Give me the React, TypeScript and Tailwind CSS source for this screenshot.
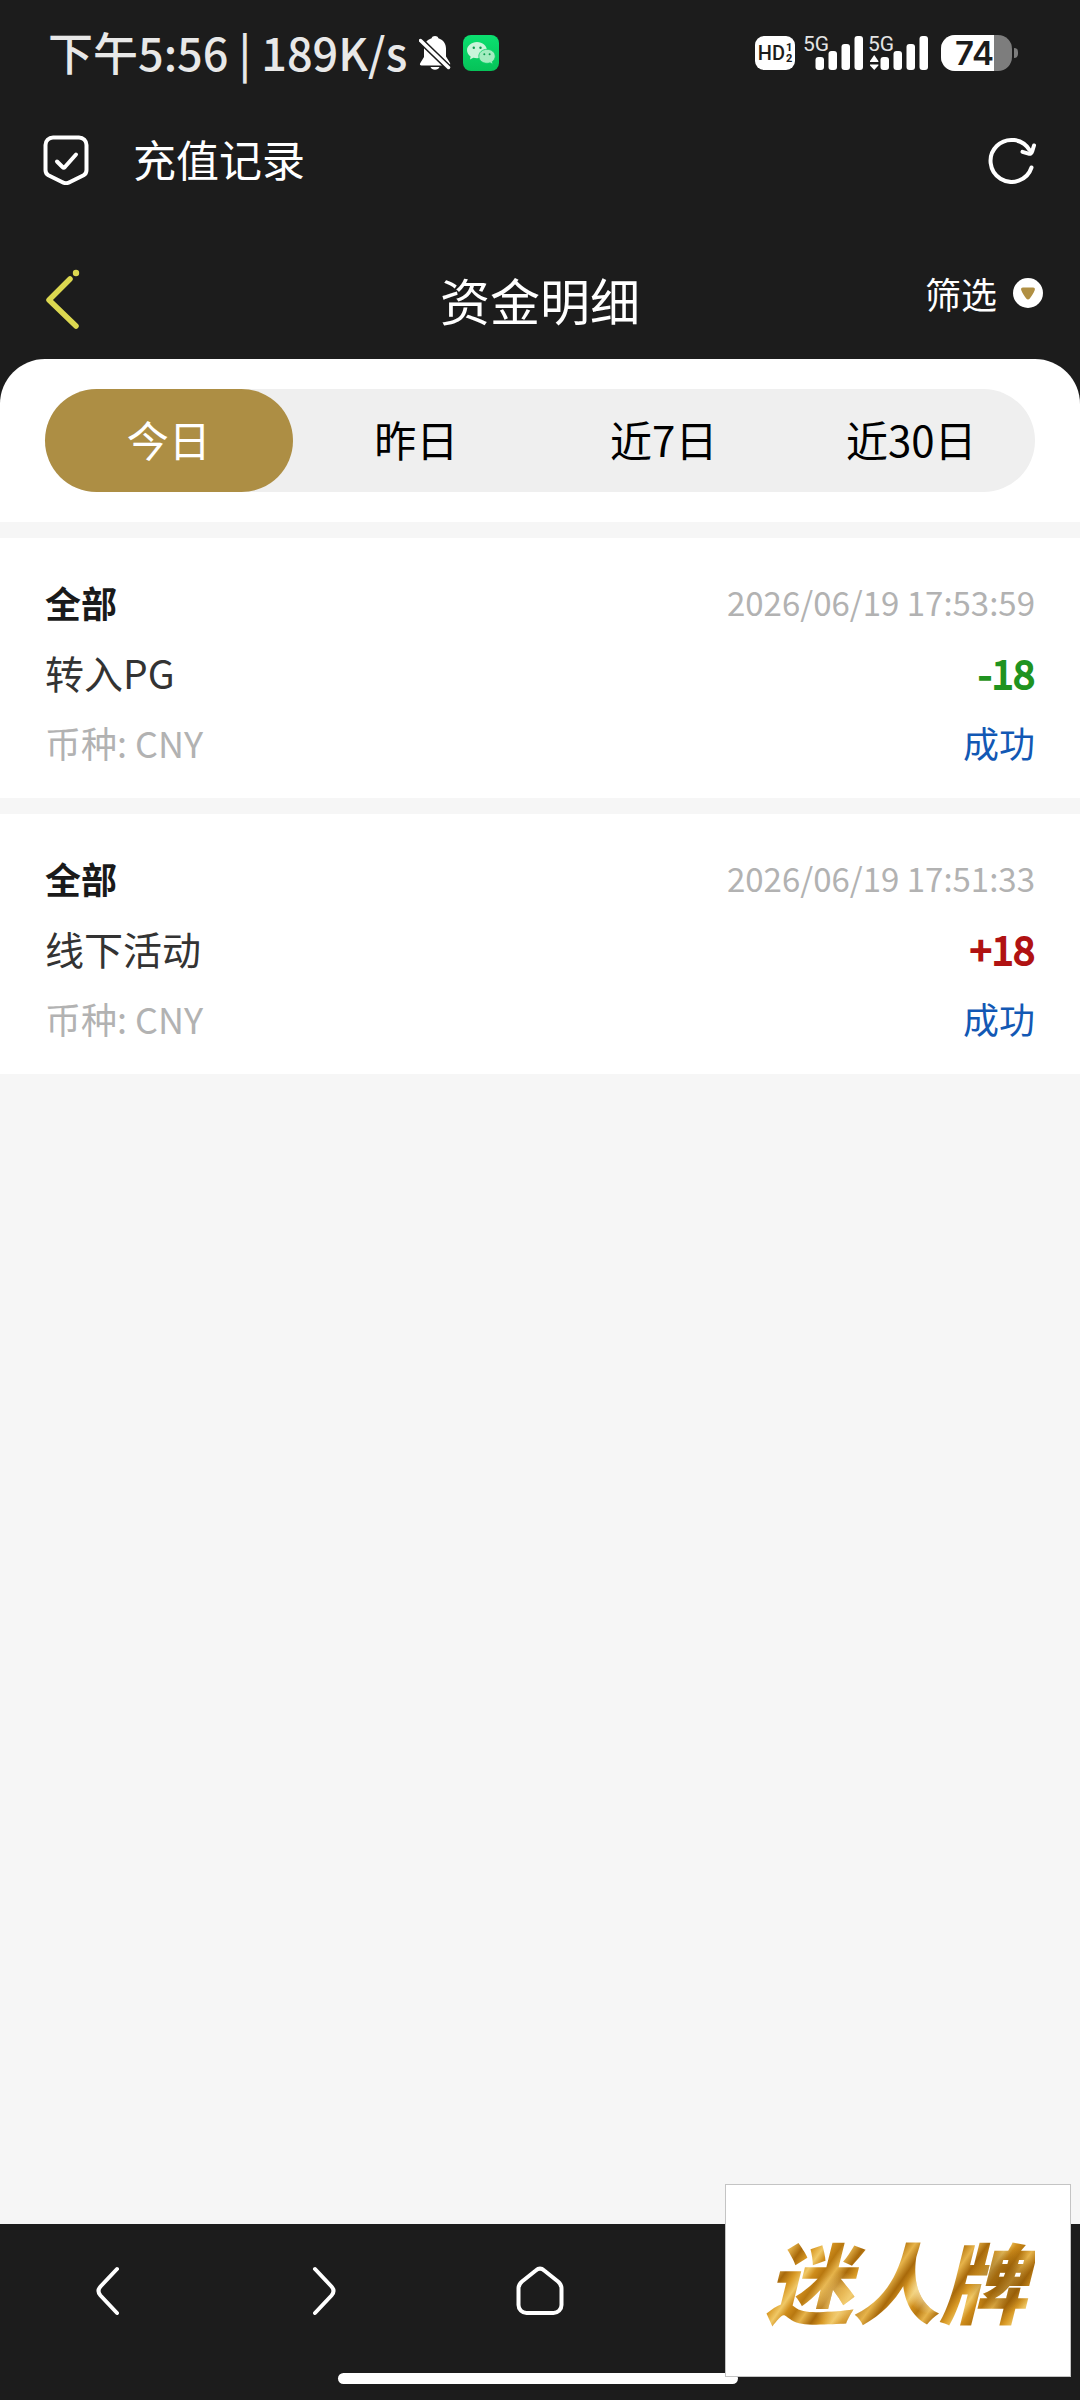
import { useState } from 'react';

type FundRecord = {
  id: number;
  category: string;
  time: string;
  title: string;
  amount: number;
  currency: string;
  status: string;
};

const TABS = ['今日', '昨日', '近7日', '近30日'];

const RECORDS: FundRecord[] = [
  {
    id: 1,
    category: '全部',
    time: '2026/06/19 17:53:59',
    title: '转入PG',
    amount: -18,
    currency: 'CNY',
    status: '成功',
  },
  {
    id: 2,
    category: '全部',
    time: '2026/06/19 17:51:33',
    title: '线下活动',
    amount: 18,
    currency: 'CNY',
    status: '成功',
  },
];

function BellOffIcon() {
  return (
    <svg width="32" height="36" viewBox="0 0 32 36" aria-hidden="true">
      <path
        d="M16 1c1.800 0 3 .9 3.400 2.200C24 4.600 27 8.500 27 13.500v8l4 6.500c.6 1.200 0 2.500-1.500 2.500h-27C1 30.500.5 29.500 1.200 28.300L5 22v-8.500C5 8.500 8 4.600 12.600 3.200 13 1.900 14.200 1 16 1z"
        fill="#fff"
      />
      <path d="M11.500 32h9c-.8 1.800-2.300 2.700-4.500 2.700S12.300 33.800 11.500 32z" fill="#fff" />
      <path d="M0 4L31 34" stroke="#1c1c1c" strokeWidth="6.500" />
      <path d="M1.500 5.500L29.500 32.500" stroke="#fff" strokeWidth="3.500" strokeLinecap="round" />
    </svg>
  );
}

function WechatIcon() {
  return (
    <svg width="36" height="36" viewBox="0 0 36 36" aria-hidden="true">
      <defs>
        <linearGradient id="wechatBg" x1="0" y1="0" x2="0" y2="1">
          <stop offset="0" stopColor="#0be070" />
          <stop offset="1" stopColor="#06c258" />
        </linearGradient>
      </defs>
      <rect width="36" height="36" rx="8" fill="url(#wechatBg)" />
      <path
        d="M14 7C8.500 7 4 10.700 4 15.300c0 2.500 1.400 4.800 3.600 6.300L7 24.500l3.300-1.700c1.200.3 2.400.5 3.700.5 5.500 0 10-3.600 10-8S19.500 7 14 7z"
        fill="#c9f5da"
      />
      <path
        d="M24 14.300c-4.600 0-8.200 3.100-8.200 7s3.600 7 8.200 7c1.100 0 2.200-.2 3.100-.5l2.700 1.500-.6-2.600c1.800-1.300 3-3.200 3-5.400 0-3.900-3.700-7-8.200-7z"
        fill="#a4ecc0"
        stroke="#0ad066"
        strokeWidth=".8"
      />
      <circle cx="10.800" cy="12.800" r="1.200" fill="#0a9c4e" />
      <circle cx="17.500" cy="12.800" r="1.200" fill="#0a9c4e" />
      <circle cx="21.300" cy="19.300" r="1" fill="#0a9c4e" />
      <circle cx="26.600" cy="19.300" r="1" fill="#0a9c4e" />
    </svg>
  );
}

function HdBadge() {
  return (
    <div className="flex h-[34px] w-10 items-center justify-center gap-px rounded-[9px] bg-white font-['Roboto',sans-serif] leading-none text-[#1c1c1c]">
      <span className="text-[20px] font-medium">HD</span>
      <span className="flex flex-col text-[11px] font-extrabold">
        <span>1</span>
        <span>2</span>
      </span>
    </div>
  );
}

function Signal({ active = false }: { active?: boolean }) {
  return (
    <div className="relative h-[34px] w-[61px]">
      <svg width="61" height="34" viewBox="0 0 61 34" fill="#fff" aria-hidden="true">
        <rect x="12.500" y="21" width="8.500" height="13" rx="3" />
        <rect x="25.500" y="15" width="8.500" height="19" rx="3" />
        <rect x="38.500" y="8" width="8.500" height="26" rx="3" />
        <rect x="51.500" y="0" width="8.500" height="34" rx="3" />
        {active && <path d="M2 25l4.200-6 4.200 6v1H2zM2 28.500h8.400v1L6.200 34 2 29.500z" />}
      </svg>
      <span className="absolute -top-0.5 left-0 font-['Roboto',sans-serif] text-[21px] leading-none text-[#e4e4e4]">
        5G
      </span>
    </div>
  );
}

function Battery() {
  return (
    <div className="flex items-center gap-0.5">
      <div className="h-9 w-[71px] rounded-[14px] bg-[#7d7d7d]">
        <div className="flex h-9 w-[53px] items-center justify-end rounded-l-[14px] bg-white font-['Inter',sans-serif] text-[33px] font-semibold leading-9 text-[#1c1c1c]">
          74
        </div>
      </div>
      <div className="h-[10px] w-1 rounded-r-full bg-[#7d7d7d]" />
    </div>
  );
}

function ShieldCheckIcon() {
  return (
    <svg width="46" height="50" viewBox="0 0 46 50" fill="none" stroke="#fff" strokeLinecap="round" strokeLinejoin="round" aria-hidden="true">
      <path
        d="M10 2.500h26a7.500 7.500 0 0 1 7.500 7.500v25c0 2.200-1 4.200-2.900 5.300L27 47a8 8 0 0 1-8 0L5.400 40.300C3.500 39.200 2.500 37.200 2.500 35V10A7.500 7.500 0 0 1 10 2.500z"
        strokeWidth="4"
      />
      <path d="M14 26.500l5.500 5.500c.8.8 1.600.8 2.400 0L33 19.500" strokeWidth="4" />
    </svg>
  );
}

function RefreshIcon() {
  return (
    <svg width="48" height="48" viewBox="0 0 48 48" fill="none" stroke="#fff" strokeWidth="4" strokeLinecap="round" strokeLinejoin="round" aria-hidden="true">
      <path d="M43.500 31.500A21 21 0 1 1 41.500 14" />
      <path d="M34.500 15.800l6 1.800c1.800.5 3.200-.3 3.600-2L46 9.500" />
    </svg>
  );
}

function StatusBar() {
  return (
    <div className="flex h-[106px] items-center justify-between pl-12 pr-[62px]">
      <div className="flex items-center">
        <span className="pb-1 text-[45px] font-medium leading-none text-[#e8e8e8]">下午5:56 | 189K/s</span>
        <span className="ml-3 flex items-center gap-3">
          <BellOffIcon />
          <WechatIcon />
        </span>
      </div>
      <div className="flex items-center">
        <HdBadge />
        <span className="ml-2 flex gap-1">
          <Signal />
          <Signal active />
        </span>
        <span className="ml-3">
          <Battery />
        </span>
      </div>
    </div>
  );
}

function RecordCard({ record }: { record: FundRecord }) {
  const positive = record.amount > 0;

  return (
    <li className="bg-white px-[45px] pb-[21px] pt-[29px] leading-[70px]">
      <div className="flex justify-between">
        <span className="text-[36px] font-bold text-[#1a1a1a]">{record.category}</span>
        <time className="text-[33px] text-[#b2b2b2]">{record.time}</time>
      </div>
      <div className="flex justify-between text-[39px]">
        <span className="text-[#333]">{record.title}</span>
        <span
          className={`[-webkit-text-stroke-width:2px] ${positive ? 'text-[#b01212]' : 'text-[#1f9320]'}`}
        >
          {positive ? `+${record.amount}` : record.amount}
        </span>
      </div>
      <div className="flex justify-between text-[36px]">
        <span className="text-[#b2b2b2]">币种: {record.currency}</span>
        <span className="text-[#1258b4]">{record.status}</span>
      </div>
    </li>
  );
}

export default function App() {
  const [activeTab, setActiveTab] = useState(TABS[0]);

  return (
    <div className="flex min-h-screen flex-col bg-[#f6f6f6] font-['Noto_Sans_CJK_SC',sans-serif]">
      <div className="bg-[#1c1c1c] text-white">
        <StatusBar />

        {/* 浏览器标题栏 */}
        <div className="flex h-[108px] items-center justify-between pl-[43px] pr-11">
          <div className="flex items-center gap-11">
            <ShieldCheckIcon />
            <span className="pb-1 text-[43px] leading-none">充值记录</span>
          </div>
          <button type="button" aria-label="刷新">
            <RefreshIcon />
          </button>
        </div>

        {/* 页面标题 */}
        <header className="grid h-[145px] grid-cols-3 items-center px-9 pt-6">
          <button type="button" aria-label="返回" className="justify-self-start pl-2">
            <svg width="36" height="60" viewBox="0 0 36 60" fill="none" aria-hidden="true">
              <path d="M26 10L5 31 32 57" stroke="#dcd850" strokeWidth="5.500" strokeLinecap="round" strokeLinejoin="round" />
              <circle cx="32" cy="4" r="3.200" fill="#dcd850" />
            </svg>
          </button>
          <h1 className="justify-self-center text-[50px] leading-none">资金明细</h1>
          <button type="button" className="mb-3 flex items-center gap-4 justify-self-end pr-px">
            <span className="text-[36px] leading-none">筛选</span>
            <svg width="30" height="30" viewBox="0 0 30 30" aria-hidden="true">
              <circle cx="15" cy="15" r="15" fill="#fff" />
              <path d="M10 9.500h10c1.700 0 2.300 1.300 1.700 2.700-1.200 3-2.900 5.800-4.900 8.300-1.100 1.400-2.500 1.400-3.600 0-2-2.500-3.700-5.300-4.900-8.300C7.700 10.800 8.300 9.500 10 9.500z" fill="#b08f43" />
            </svg>
          </button>
        </header>

        {/* 日期筛选 */}
        <div className="rounded-t-[45px] bg-white px-[45px] py-[30px]">
          <div className="flex rounded-full bg-[#efefef]">
            {TABS.map((tab) => (
              <button
                key={tab}
                type="button"
                onClick={() => setActiveTab(tab)}
                className={`h-[103px] flex-1 rounded-full pb-1 text-[42px] ${
                  activeTab === tab ? 'bg-[#ad8e44] text-white' : 'text-black'
                }`}
              >
                {tab}
              </button>
            ))}
          </div>
        </div>
      </div>

      {/* 记录列表 */}
      <ul className="mt-4 flex flex-1 flex-col gap-4">
        {RECORDS.map((record) => (
          <RecordCard key={record.id} record={record} />
        ))}
      </ul>

      {/* 底部导航 */}
      <footer className="relative bg-[#1c1c1c]">
        <nav className="grid h-[133px] grid-cols-5 items-center justify-items-center">
          <button type="button" aria-label="后退">
            <svg width="24" height="50" viewBox="0 0 24 50" fill="none" stroke="#fff" strokeWidth="4" strokeLinecap="round" aria-hidden="true">
              <path d="M21 3L4.500 20.500q-4 4.500 0 9L21 47" />
            </svg>
          </button>
          <button type="button" aria-label="前进">
            <svg width="24" height="50" viewBox="0 0 24 50" fill="none" stroke="#fff" strokeWidth="4" strokeLinecap="round" aria-hidden="true">
              <path d="M3 3l16.500 17.500q4 4.500 0 9L3 47" />
            </svg>
          </button>
          <button type="button" aria-label="主页">
            <svg width="48" height="50" viewBox="0 0 48 50" fill="none" stroke="#fff" strokeWidth="4" strokeLinejoin="round" aria-hidden="true">
              <path d="M19.800 4.500q4.200-3.600 8.400 0L42 15.500q3.500 3 3.500 7V39a8 8 0 0 1-8 8h-27a8 8 0 0 1-8-8V22.500q0-4 3.500-7z" />
            </svg>
          </button>
        </nav>
        <div className="flex h-[43px] items-start justify-center pr-1 pt-4">
          <div className="h-[11px] w-[400px] rounded-full bg-white" />
        </div>

        {/* 浮动广告 */}
        <a
          href="#"
          className="absolute bottom-[23px] right-[9px] flex h-[193px] w-[346px] items-center justify-center border border-[#c4c4c4] bg-white pb-1 pr-1"
        >
          <span className="bg-[radial-gradient(circle_at_30%_70%,#f3cf7a90_0_6%,transparent_14%),radial-gradient(circle_at_62%_60%,#f8e6b0c0_0_5%,transparent_13%),radial-gradient(circle_at_88%_50%,#7a4a0480_0_5%,transparent_14%),repeating-linear-gradient(125deg,#a8690a_0px,#d99a26_9px,#f0c866_17px,#cf8d1c_24px,#b87810_31px,#e6b34a_40px,#a8690a_50px)] bg-clip-text px-2 text-[87px] font-black italic leading-[110px] text-transparent">
            迷人牌
          </span>
        </a>
      </footer>
    </div>
  );
}
